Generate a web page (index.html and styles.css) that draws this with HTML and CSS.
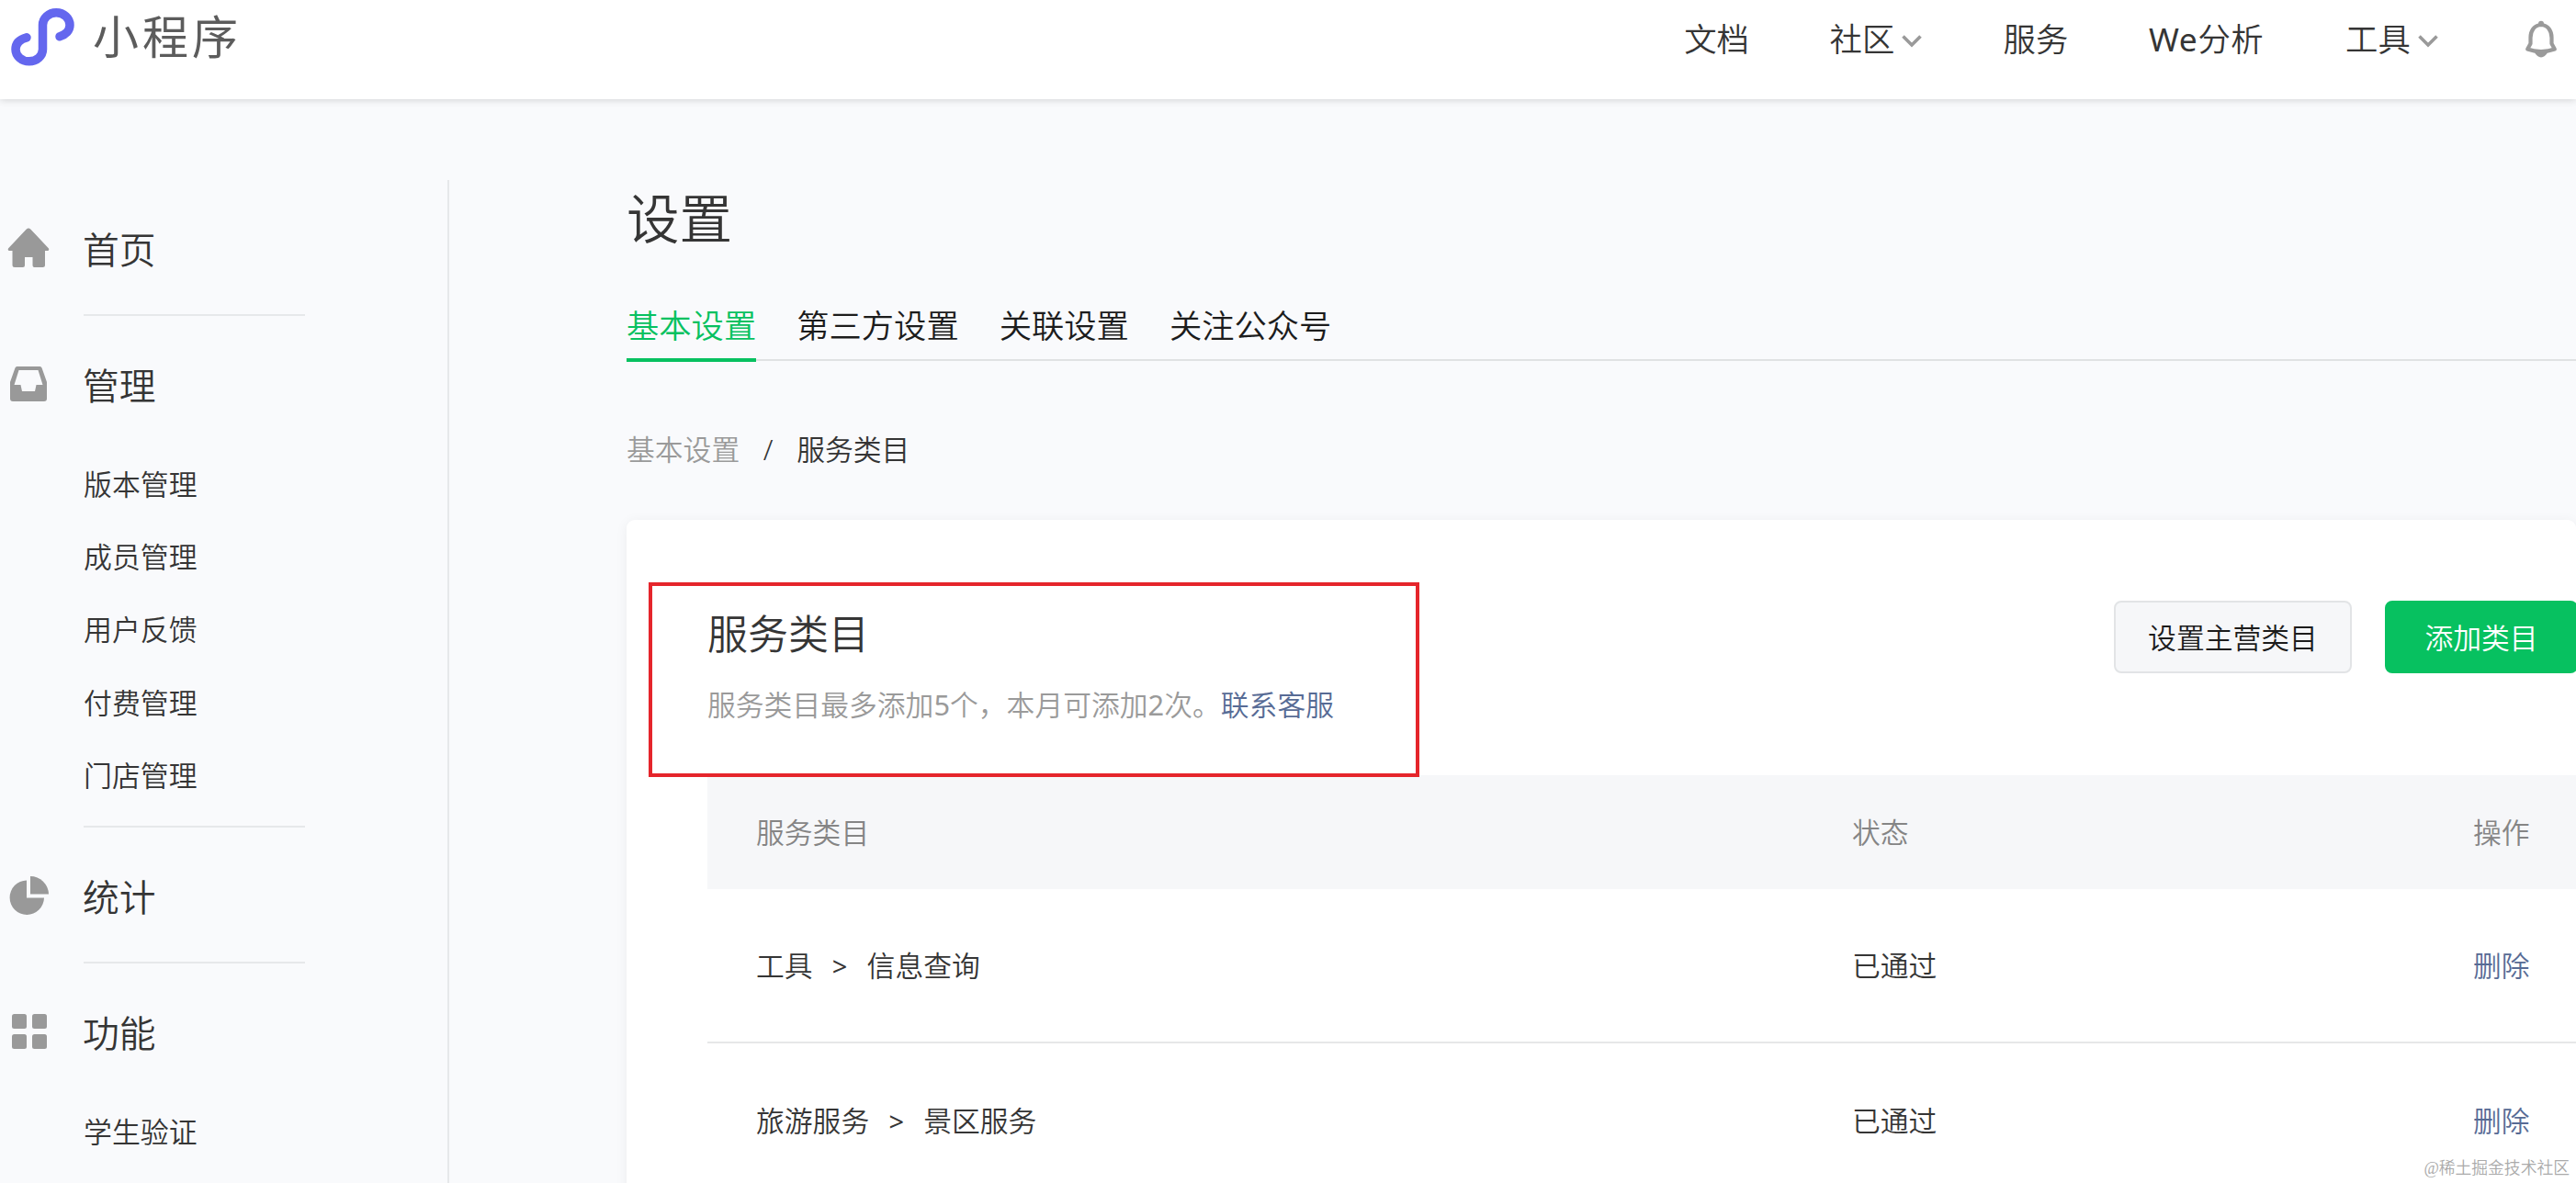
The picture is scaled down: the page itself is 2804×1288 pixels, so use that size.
FILE: index.html
```html
<!DOCTYPE html>
<html lang="zh-CN">
<head>
<meta charset="utf-8">
<title>小程序</title>
<link rel="stylesheet" href="styles.css">
</head>
<body>
<header class="topbar">
  <a class="brand">
    <svg class="brand-mark" width="72" height="66" viewBox="0 0 72 66"><path d="M17.500 33.500C10 35.500 5.500 40 5.500 46.500C5.500 53.500 12 59.500 20.300 59.500C28.500 59.500 35 53.500 35 46.500V20C35 12.500 41.500 6.500 49.700 6.500C58 6.500 64.500 12.500 64.500 20C64.500 26 60 30.500 53.500 32.500" transform="translate(.5 .3)" fill="none" stroke="#6467ee" stroke-width="9.500" stroke-linecap="round"/></svg>
    <span class="brand-name">小程序</span>
  </a>
  <nav class="topnav">
    <a>文档</a>
    <a class="has-menu">社区<svg class="chevron" width="22" height="14" viewBox="0 0 22 14"><path d="M1.500 1.500L11 11L20.500 1.500" fill="none" stroke="#9a9a9a" stroke-width="3.600"/></svg></a>
    <a>服务</a>
    <a class="analysis"><span class="latin">We</span>分析</a>
    <a class="has-menu">工具<svg class="chevron" width="22" height="14" viewBox="0 0 22 14"><path d="M1.500 1.500L11 11L20.500 1.500" fill="none" stroke="#9a9a9a" stroke-width="3.600"/></svg></a>
  </nav>
  <svg class="bell" width="36" height="42" viewBox="0 0 36 42"><path d="M18 5C10.500 5.500 6.500 11.500 6.500 19V25.500L3.200 31.500Q10 34 18 34Q26 34 32.800 31.500L29.500 25.500V19C29.500 11.500 25.500 5.500 18 5Z" fill="none" stroke="#9a9a9a" stroke-width="4.200" stroke-linejoin="round"/><path d="M10 34H26Q22 40.500 18 40.500Q14 40.500 10 34Z" fill="#9a9a9a"/><circle cx="18" cy="3.800" r="3" fill="#9a9a9a"/></svg>
</header>
<div class="layout">
  <aside class="sidebar">
    <section class="group">
      <h2 class="group-title"><svg class="icon" width="46" height="46" viewBox="0 0 46 46"><path d="M20.800 1.400Q23 -.5 25.200 1.400L45 22.500Q46 25 43.500 25H41V40.500Q41 43 38.500 43H29.500Q27.500 43 27.500 41V32H19V41Q19 43 17 43H8Q5.500 43 5.500 40.500V25H2.500Q0 25 1 22.500Z" fill="#999"/></svg>首页</h2>
    </section>
    <section class="group">
      <h2 class="group-title"><svg class="icon" width="46" height="46" viewBox="0 0 46 46"><path transform="translate(0 -1)" fill-rule="evenodd" d="M10.500 4H35.500Q37 4 37.500 5.500L43 21V39Q43 42 40 42H6Q3 42 3 39V21L8.500 5.500Q9 4 10.500 4ZM12.500 8L7.500 24H14.500L16 31H30L31.500 24H38.500L33.500 8Z" fill="#999"/></svg>管理</h2>
      <ul class="links"><li>版本管理</li><li>成员管理</li><li>用户反馈</li><li>付费管理</li><li>门店管理</li></ul>
    </section>
    <section class="group">
      <h2 class="group-title"><svg class="icon" width="46" height="46" viewBox="0 0 46 46"><g transform="translate(0 1)"><path d="M21 5.500V24.500H40A18.700 18.700 0 1 1 21 5.500Z" fill="#999"/><path d="M25 1A20 20 0 0 1 45 20.500H25Z" fill="#999"/></g></svg>统计</h2>
    </section>
    <section class="group">
      <h2 class="group-title"><svg class="icon" width="46" height="46" viewBox="0 0 46 46" fill="#999"><rect x="5" y="4" width="16" height="16" rx="2.500"/><rect x="27" y="4" width="16" height="16" rx="2.500"/><rect x="5" y="26" width="16" height="16" rx="2.500"/><rect x="27" y="26" width="16" height="16" rx="2.500"/></svg>功能</h2>
      <ul class="links"><li>学生验证</li></ul>
    </section>
  </aside>
  <main class="main">
    <h1 class="page-title">设置</h1>
    <div class="tabs"><a class="tab active">基本设置</a><a class="tab">第三方设置</a><a class="tab">关联设置</a><a class="tab">关注公众号</a></div>
    <div class="crumbs"><a class="crumb-parent">基本设置</a><span class="crumb-sep">/</span><span>服务类目</span></div>
    <section class="card">
      <div class="card-head">
        <div class="card-intro">
          <h3 class="card-title">服务类目</h3>
          <p class="card-desc">服务类目最多添加<span class="latin">5</span>个，本月可添加<span class="latin">2</span>次。<a class="link">联系客服</a></p>
          <div class="highlight"></div>
        </div>
        <div class="actions"><button class="btn">设置主营类目</button><button class="btn primary">添加类目</button></div>
      </div>
      <div class="table">
        <div class="row head"><span>服务类目</span><span>状态</span><span>操作</span></div>
        <div class="row"><span class="path">工具<i class="gt">&gt;</i>信息查询</span><span>已通过</span><a class="link">删除</a></div>
        <div class="row"><span class="path">旅游服务<i class="gt">&gt;</i>景区服务</span><span>已通过</span><a class="link">删除</a></div>
      </div>
    </section>
  </main>
</div>
<div class="watermark">@稀土掘金技术社区</div>
</body>
</html>
```
FILE: styles.css
```css
* { box-sizing: border-box; }

body {
  margin: 0;
  height: 1288px;
  overflow: hidden;
  position: relative;
  display: flex;
  flex-direction: column;
  background: #f9fafc;
  color: #353535;
  font-family: "Noto Sans", "Noto Sans CJK SC", sans-serif;
  font-size: 30.8px;
  font-weight: 350;
}

h1, h2, h3, p, ul { margin: 0; padding: 0; font-weight: inherit; list-style: none; }
.link { color: #576b95; }
.latin { font-weight: 400; }

/* Top bar */
.topbar {
  flex: none;
  height: 108px;
  display: flex;
  align-items: flex-start;
  background: #fff;
  box-shadow: 0 1px 8px rgba(0, 0, 0, .16);
  position: relative;
}
.brand { display: flex; padding: 7px 0 0 11px; color: #5c5c5c; }
.brand-mark { flex: none; }
.brand-name { margin-left: 18px; font-size: 50px; line-height: 66px; letter-spacing: 4px; font-weight: 400; }
.topnav { display: flex; gap: 88px; margin-left: auto; font-size: 35.4px; line-height: 84px; }
.topnav a { white-space: nowrap; width: 70.4px; }
.topnav .has-menu { display: flex; align-items: center; width: 101px; }
.topnav .analysis { width: 126px; letter-spacing: .6px; }
.chevron { flex: none; margin: 5px 0 0 8px; }
.bell { margin: 22px 20px 0 94px; flex: none; }

.layout { flex: 1; display: flex; min-height: 0; }

/* Sidebar */
.sidebar { flex: none; width: 489px; margin-top: 88px; border-right: 2px solid #e6e8ea; }
.group { position: relative; margin-bottom: 2px; }
.group + .group::before { content: ""; display: block; width: 241px; height: 2px; margin-left: 91px; background: #e6e8ea; }
.group-title { display: flex; align-items: center; height: 144px; padding: 8px 0 0 8px; font-size: 39.8px; line-height: 60px; }
.icon { flex: none; margin: 0 36px 3px 0; }
.links { padding: 0 0 13px 91px; font-size: 30.9px; }
.links li { height: 79.2px; line-height: 79.2px; }

/* Main column */
.main { flex: 1; min-width: 0; margin-left: 193px; padding-top: 90px; }
.page-title { font-size: 57.6px; line-height: 80px; }
.tabs { display: flex; gap: 44px; margin-top: 44px; height: 71px; border-bottom: 2px solid #e0e2e3; font-size: 35.3px; line-height: 65px; color: #1c1c1c; }
.tab { height: 72px; }
.tab.active { color: #07c160; border-bottom: 4px solid #07c160; }
.crumbs { display: flex; margin-top: 66px; line-height: 60px; }
.crumb-parent { color: #9a9a9a; }
.crumb-sep { width: 62px; text-align: center; }

/* Card */
.card { margin-top: 47px; height: 760px; padding: 68px 0 0 88px; background: #fff; border-radius: 9px; box-shadow: 0 2px 14px rgba(0, 0, 0, .06); }
.card-head { height: 210px; display: flex; justify-content: space-between; align-items: flex-start; }
.card-intro { position: relative; padding-top: 26px; }
.card-title { font-size: 44px; line-height: 60px; }
.card-desc { margin-top: 17px; line-height: 60px; color: #9a9a9a; white-space: nowrap; }
.highlight { position: absolute; left: -64px; top: 0; width: 839px; height: 212px; border: 4px solid #e5252b; }
.actions { display: flex; gap: 36px; padding-top: 20px; margin-right: -2px; }
.btn { width: 259px; height: 79px; padding: 0 0 3px; border: 2px solid #e2e4e6; border-radius: 8px; background: #f6f7f9; color: #1c1c1c; font: inherit; }
.btn.primary { width: 210px; border-color: #07c160; background: #07c160; color: #fff; }

.row { display: grid; grid-template-columns: 1193px 676px 1fr; align-items: center; height: 166px; padding: 0 0 4px 53px; }
.row.head { height: 124px; background: #f6f7f9; color: #858585; }
.row + .row + .row { height: 171px; border-top: 2px solid #e6e7e8; }
.gt { display: inline-block; width: 59px; text-align: center; font-style: normal; font-size: 29px; font-weight: 400; }

.watermark { position: absolute; right: 7px; bottom: 4px; color: #aaa; font-family: "Liberation Serif", "Noto Sans CJK SC", serif; font-size: 17.8px; line-height: 24px; }
```
